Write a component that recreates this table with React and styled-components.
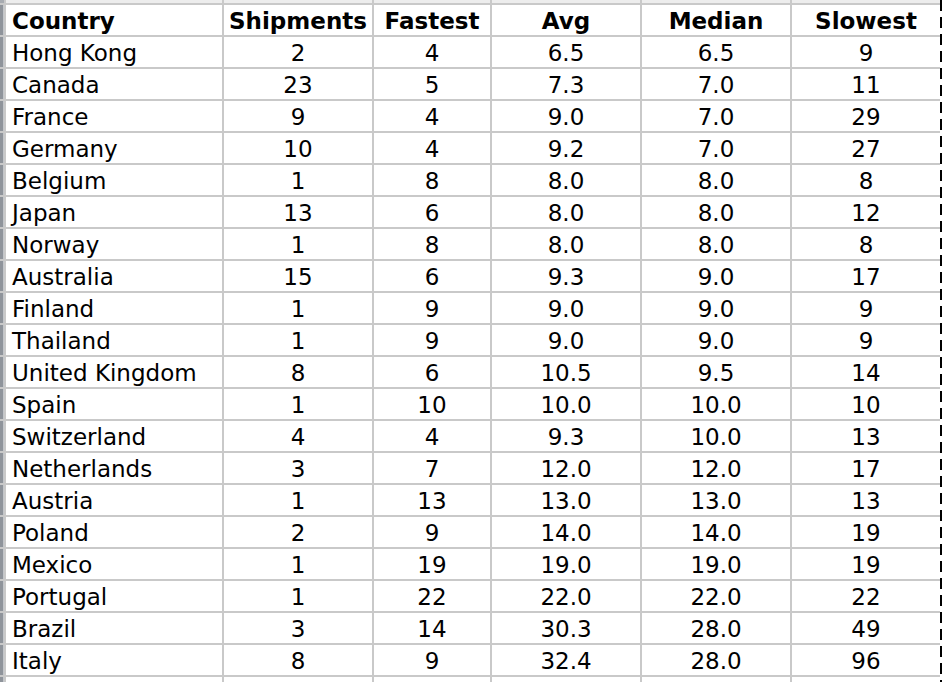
import React from 'react';
import styled, { createGlobalStyle } from 'styled-components';

const GlobalStyle = createGlobalStyle`
  body {
    margin: 0;
    background: #ffffff;
  }
`;

const rows = [
    ['Hong Kong', 2, 4, '6.5', '6.5', 9],
    ['Canada', 23, 5, '7.3', '7.0', 11],
    ['France', 9, 4, '9.0', '7.0', 29],
    ['Germany', 10, 4, '9.2', '7.0', 27],
    ['Belgium', 1, 8, '8.0', '8.0', 8],
    ['Japan', 13, 6, '8.0', '8.0', 12],
    ['Norway', 1, 8, '8.0', '8.0', 8],
    ['Australia', 15, 6, '9.3', '9.0', 17],
    ['Finland', 1, 9, '9.0', '9.0', 9],
    ['Thailand', 1, 9, '9.0', '9.0', 9],
    ['United Kingdom', 8, 6, '10.5', '9.5', 14],
    ['Spain', 1, 10, '10.0', '10.0', 10],
    ['Switzerland', 4, 4, '9.3', '10.0', 13],
    ['Netherlands', 3, 7, '12.0', '12.0', 17],
    ['Austria', 1, 13, '13.0', '13.0', 13],
    ['Poland', 2, 9, '14.0', '14.0', 19],
    ['Mexico', 1, 19, '19.0', '19.0', 19],
    ['Portugal', 1, 22, '22.0', '22.0', 22],
    ['Brazil', 3, 14, '30.3', '28.0', 49],
    ['Italy', 8, 9, '32.4', '28.0', 96],
];

const headers = ['Country', 'Shipments', 'Fastest', 'Avg', 'Median', 'Slowest'];

export default function App() {
    return (
        <>
            <GlobalStyle />
            <Selection>
                <Sheet>
                    {/* spreadsheet chrome: corner + column header strip */}
                    <Corner />
                    {headers.map((h) => <ColStrip key={h} />)}

                    <RowStrip />
                    {headers.map((h, i) => (
                        <Cell key={h} $bold $left={i === 0}>{h}</Cell>
                    ))}

                    {rows.map((r) => (
                        <React.Fragment key={r[0]}>
                            <RowStrip />
                            {r.map((v, i) => (
                                <Cell key={i} $left={i === 0}>{v}</Cell>
                            ))}
                        </React.Fragment>
                    ))}

                    <RowStrip />
                    {headers.map((h) => <Cell key={h} />)}
                </Sheet>
            </Selection>
        </>
    );
}

const Selection = styled.div`
  display: block;
  width: max-content;
  height: 682px;
  overflow: hidden;
  padding-right: 2px;
  background: repeating-linear-gradient(to bottom, #000 0 11px, transparent 11px 17px);
  background-size: 2px 100%;
  background-position: right top;
  background-repeat: no-repeat;
`;

const Sheet = styled.div`
  display: grid;
  grid-template-columns: 4px 216px 148px 116px 148px 148px 148px;
  grid-template-rows: 3px;
  grid-auto-rows: 30px;
  gap: 2px;
  background: #c9c9c9;
`;

const Corner = styled.div`
  background: #a7abb1;
`;

const ColStrip = styled.div`
  background: #ededed;
`;

const RowStrip = styled.div`
  background: linear-gradient(to right, #8f949b 0 3px, #c3c6ca 3px);
`;

const Cell = styled.div`
  background: #ffffff;
  color: #000000;
  font-family: "DejaVu Sans", Verdana, sans-serif;
  font-size: 23px;
  font-weight: ${(p) => (p.$bold ? 700 : 400)};
  line-height: 32px;
  white-space: nowrap;
  overflow: hidden;
  text-align: ${(p) => (p.$left ? 'left' : 'center')};
  padding: ${(p) => (p.$left ? '0 0 0 6px' : '0')};
`;
